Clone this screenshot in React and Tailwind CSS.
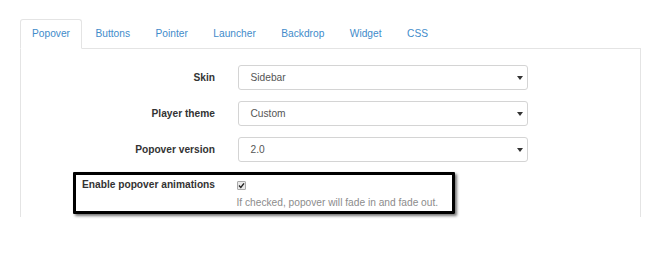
import React from "react";

const tabs = ["Popover", "Buttons", "Pointer", "Launcher", "Backdrop", "Widget", "CSS"];

function Caret() {
  return (
    <svg width="6" height="4" viewBox="0 0 6 4" className="absolute right-[4px] top-1/2 -translate-y-1/2">
      <path d="M0 0 L6 0 L3 4 Z" fill="#333" />
    </svg>
  );
}

function SelectRow({ label, value }) {
  return (
    <div className="flex items-center h-[25px]">
      <div className="w-[194px] text-right font-bold text-[#333]">{label}</div>
      <div className="relative ml-[22.5px] w-[290.5px] h-[25px] border border-[#d4d4d4] rounded-[3px] bg-white flex items-center pl-[12px] text-[#555]">
        {value}
        <Caret />
      </div>
    </div>
  );
}

export default function App() {
  return (
    <div
      className="w-[662px] h-[256px] bg-white pt-[19px] pl-[20px] text-[10.2px]"
      style={{ fontFamily: '"Liberation Sans", Arial, sans-serif' }}
    >
      <div className="w-[621px]">
        <ul className="flex border-b border-[#e4e4e4]">
          {tabs.map((t, i) => (
            <li
              key={t}
              className={
                i === 0
                  ? "-mb-px mr-[1.5px] px-[11px] py-[7px] leading-[14px] border border-[#e4e4e4] border-b-white rounded-t-[3px] bg-white text-[#428bca]"
                  : "-mb-px mr-[1.5px] px-[11px] py-[7px] leading-[14px] border border-transparent rounded-t-[3px] text-[#428bca]"
              }
            >
              {t}
            </li>
          ))}
        </ul>
        <div className="border-l border-r border-[#e4e4e4] h-[168px] pt-[16px] flex flex-col">
          <div className="flex flex-col gap-[11px]">
            <SelectRow label="Skin" value="Sidebar" />
            <SelectRow label="Player theme" value="Custom" />
            <SelectRow label="Popover version" value="2.0" />
          </div>
          <div className="mt-[10px] ml-[52px] w-[382px] h-[42px] border-[3px] border-black rounded-[1px] shadow-[2px_2px_3px_rgba(0,0,0,0.55)] pt-[3px] pb-[1px]">
            <div className="flex items-center h-[14px]">
              <div className="w-[139px] text-right font-bold text-[#333] leading-[14px]">Enable popover animations</div>
              <div className="ml-[21.5px] w-[9px] h-[9px] border border-[#a9a9a9] rounded-[1px] bg-[#e9e9e9] flex items-center justify-center">
                <svg width="7" height="7" viewBox="0 0 7 7">
                  <path d="M1 3.6 L2.8 5.4 L6 1.4" stroke="#222" strokeWidth="1.4" fill="none" />
                </svg>
              </div>
            </div>
            <div className="mt-[4px] ml-[160.5px] leading-[14px] text-[#8c8c8c]">
              If checked, popover will fade in and fade out.
            </div>
          </div>
        </div>
      </div>
    </div>
  );
}
